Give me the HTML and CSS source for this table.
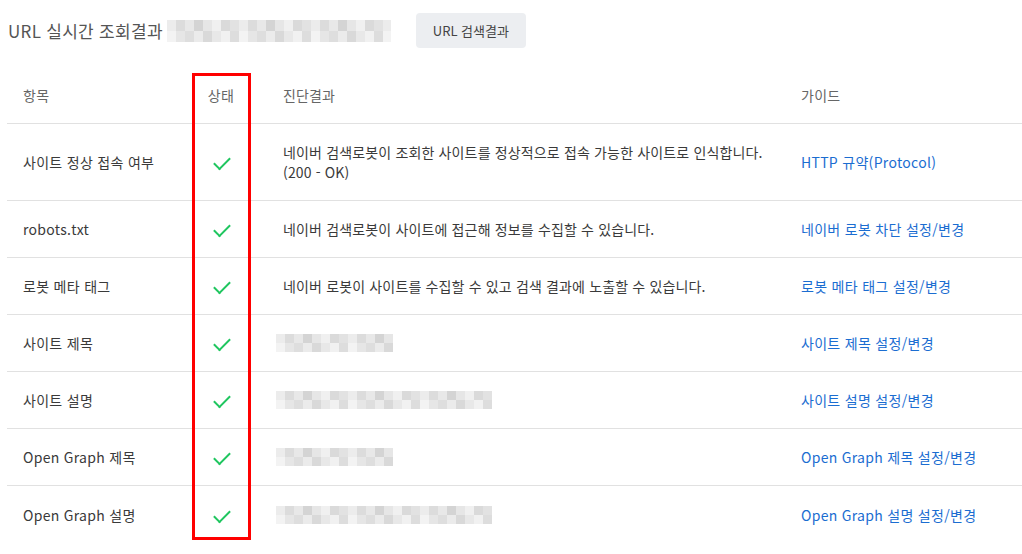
FILE: index.html
```html
<!DOCTYPE html>
<html lang="ko">
<head>
    <meta charset="UTF-8">
    <title>URL 실시간 조회결과</title>
    <link rel="stylesheet" href="styles.css">
</head>
<body>
    <div class="head">
        <h2 class="title">URL 실시간 조회결과</h2>
        <span class="mosaic title-mosaic"></span>
        <button class="btn">URL 검색결과</button>
    </div>

    <div class="result">
        <div class="row row-head">
            <div class="cell">항목</div>
            <div class="cell state">상태</div>
            <div class="cell desc">진단결과</div>
            <div class="cell guide">가이드</div>
        </div>
        <div class="row row-tall">
            <div class="cell">사이트 정상 접속 여부</div>
            <div class="cell state"><span class="check"></span></div>
            <div class="cell desc">네이버 검색로봇이 조회한 사이트를 정상적으로 접속 가능한 사이트로 인식합니다.<br>(200 - OK)</div>
            <div class="cell guide"><a href="#">HTTP 규약(Protocol)</a></div>
        </div>
        <div class="row">
            <div class="cell">robots.txt</div>
            <div class="cell state"><span class="check"></span></div>
            <div class="cell desc">네이버 검색로봇이 사이트에 접근해 정보를 수집할 수 있습니다.</div>
            <div class="cell guide"><a href="#">네이버 로봇 차단 설정/변경</a></div>
        </div>
        <div class="row">
            <div class="cell">로봇 메타 태그</div>
            <div class="cell state"><span class="check"></span></div>
            <div class="cell desc">네이버 로봇이 사이트를 수집할 수 있고 검색 결과에 노출할 수 있습니다.</div>
            <div class="cell guide"><a href="#">로봇 메타 태그 설정/변경</a></div>
        </div>
        <div class="row">
            <div class="cell">사이트 제목</div>
            <div class="cell state"><span class="check"></span></div>
            <div class="cell desc"><span class="mosaic short"></span></div>
            <div class="cell guide"><a href="#">사이트 제목 설정/변경</a></div>
        </div>
        <div class="row">
            <div class="cell">사이트 설명</div>
            <div class="cell state"><span class="check"></span></div>
            <div class="cell desc"><span class="mosaic long"></span></div>
            <div class="cell guide"><a href="#">사이트 설명 설정/변경</a></div>
        </div>
        <div class="row">
            <div class="cell">Open Graph 제목</div>
            <div class="cell state"><span class="check"></span></div>
            <div class="cell desc"><span class="mosaic short"></span></div>
            <div class="cell guide"><a href="#">Open Graph 제목 설정/변경</a></div>
        </div>
        <div class="row row-last">
            <div class="cell">Open Graph 설명</div>
            <div class="cell state"><span class="check"></span></div>
            <div class="cell desc"><span class="mosaic long"></span></div>
            <div class="cell guide"><a href="#">Open Graph 설명 설정/변경</a></div>
        </div>
        <div class="highlight"></div>
    </div>
</body>
</html>
```

FILE: styles.css
```css
*{
    margin: 0;
    padding: 0;
    box-sizing: border-box;
}
body{
    width: 1022px;
    height: 554px;
    overflow: hidden;
    background: #ffffff;
    font-family: "Noto Sans CJK KR", "Noto Sans", sans-serif;
    color: #3a3a3a;
    font-size: 14px;
}
.head{
    display: flex;
    align-items: center;
    height: 61px;
    padding: 0 0 0 8px;
}
.title{
    font-size: 17px;
    font-weight: 400;
    color: #555555;
    letter-spacing: 0.3px;
}
.title-mosaic{
    width: 224px;
    height: 22px;
    margin: 0 25px 0 4px;
}
.btn{
    width: 110px;
    height: 35px;
    border: none;
    border-radius: 4px;
    background: #eceef1;
    color: #444444;
    font-family: inherit;
    font-size: 13px;
}
.result{
    position: relative;
    margin: 12px 0 0 7px;
}
.row{
    display: grid;
    grid-template-columns: 185px 58px 535px 1fr;
    height: 57px;
    border-bottom: 1px solid #e1e1e1;
    align-items: center;
}
.row-last{
    border-bottom: none;
}
.row-head{
    height: 51px;
    padding-bottom: 6px;
    color: #666666;
}
.row-tall{
    height: 77px;
}
.cell{
    padding-left: 16px;
    line-height: 20px;
    letter-spacing: 0.3px;
}
.state{
    padding-left: 0;
    text-align: center;
    display: flex;
    justify-content: center;
}
.desc{
    padding-left: 33px;
    letter-spacing: 0.15px;
}
.guide a{
    color: #1b6dd1;
    text-decoration: none;
}
.check{
    display: block;
    width: 16px;
    height: 9px;
    border-left: 2.5px solid #1fc65f;
    border-bottom: 2.5px solid #1fc65f;
    transform: rotate(-45deg);
    margin: -1px 0 0 1px;
}
.mosaic{
    display: block;
    background:
        linear-gradient(90deg, #ececec 0 9px, #dcdcdc 9px 18px, #e8e8e8 18px 27px, #d4d4d4 27px 36px, #e6e6e6 36px 45px, #f0f0f0 45px 54px, #dadada 54px 63px, #e2e2e2 63px 72px) 0 0 / 72px 50% repeat-x,
        linear-gradient(90deg, #f3f3f3 0 9px, #e6e6e6 9px 18px, #dedede 18px 27px, #ebebeb 27px 36px, #d9d9d9 36px 45px, #e8e8e8 45px 54px, #f1f1f1 54px 63px, #dddddd 63px 72px) 0 100% / 72px 50% repeat-x;
}
.desc .mosaic{
    margin-left: -7px;
}
.short{
    width: 117px;
    height: 18px;
}
.long{
    width: 216px;
    height: 18px;
}
.highlight{
    position: absolute;
    left: 185px;
    top: 0;
    width: 59px;
    height: 467px;
    border: 3px solid #ff0000;
}
```
